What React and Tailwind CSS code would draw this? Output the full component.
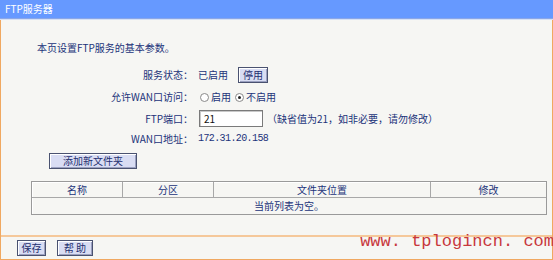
const labelCls = "w-[192px] mr-[5px] shrink-0 text-right";

const Btn = ({ children, className = "" }) => (
  <span
    className={`inline-flex items-center justify-center h-[16px] border border-[#4a5270] bg-[#d9ddf3] text-[#1f2f70] text-[10px] leading-none ${className}`}
    style={{ boxShadow: "inset 1px 1px 0 #fff, inset -1px -1px 0 #9aa0c0" }}
  >
    {children}
  </span>
);

const Radio = ({ checked }) => (
  <span className="inline-flex items-center justify-center w-[9px] h-[9px] rounded-full bg-white border border-[#8a8a8a] mr-[2px]">
    {checked && <span className="w-[3px] h-[3px] rounded-full bg-[#222]" />}
  </span>
);

export default function App() {
  return (
    <div
      className="w-[553px] h-[260px] bg-[#f6f6f3] text-[#22337a] text-[10px] leading-none flex flex-col overflow-hidden"
      style={{ fontFamily: '"Noto Sans CJK SC", "Liberation Sans", sans-serif' }}
    >
      {/* header */}
      <div className="h-[19px] shrink-0 bg-[#6699ff] text-white text-[10px] flex items-center pl-[5px] border-b border-[#8aa6e8]">
        FTP服务器
      </div>
      <div className="h-[1px] shrink-0 bg-[#d5e0f5]" />

      <div className="flex-1 flex flex-col border-x border-[#f0a860] border-b">
        {/* content */}
        <div className="h-[215px] shrink-0 flex flex-col">
          <div className="mt-[21px] ml-[36px] h-[14px] flex items-center">本页设置FTP服务的基本参数。</div>

          <div className="mt-[8px] h-[23px] flex items-center">
            <span className={labelCls}>服务状态：</span>
            <span>已启用</span>
            <Btn className="ml-[10px] w-[30px]">停用</Btn>
          </div>

          <div className="h-[22px] flex items-center">
            <span className={labelCls}>允许WAN口访问：</span>
            <span className="ml-[2px] flex items-center">
              <Radio />
              <span>启用</span>
              <span className="ml-[4px]" />
              <Radio checked />
              <span>不启用</span>
            </span>
          </div>

          <div className="h-[21px] flex items-center">
            <span className={labelCls}>FTP端口：</span>
            <span
              className="ml-[1px] w-[64px] h-[17px] bg-white border border-[#7a7a7a] flex items-center pl-[4px] text-[#111]"
              style={{ boxShadow: "inset 1px 1px 0 #c8c8c8" }}
            >
              21
            </span>
            <span className="ml-[4px]">（缺省值为21，如非必要，请勿修改）</span>
          </div>

          <div className="h-[20px] flex items-center">
            <span className={labelCls}>WAN口地址：</span>
            <span style={{ fontFamily: '"Liberation Mono", monospace' }} className="tracking-[-0.6px]">172.31.20.158</span>
          </div>

          <div className="mt-[4px] ml-[48px] flex">
            <Btn className="w-[88px]">添加新文件夹</Btn>
          </div>

          <div
            className="mt-[12px] ml-[30px] w-[516px] border border-[#9a9a9a] bg-[#f6f6f3]"
            style={{ boxShadow: "inset 1px 1px 0 #fff" }}
          >
            <div className="flex h-[16px] border-b border-[#a8a8a8]">
              <div className="w-[91px] flex items-center justify-center border-r border-[#a8a8a8]">名称</div>
              <div className="w-[91px] flex items-center justify-center border-r border-[#a8a8a8]">分区</div>
              <div className="w-[217px] flex items-center justify-center border-r border-[#a8a8a8]">文件夹位置</div>
              <div className="flex-1 flex items-center justify-center">修改</div>
            </div>
            <div className="h-[16px] flex items-center justify-center">当前列表为空。</div>
          </div>
        </div>

        <div className="h-[2px] shrink-0 bg-[#f5c89a]" />

        {/* footer */}
        <div className="flex-1 relative flex items-center">
          <Btn className="ml-[16px] w-[29px]">保存</Btn>
          <Btn className="ml-[11px] w-[36px]">帮 助</Btn>
          <span
            className="absolute right-[-2px] top-[-4px] text-[17px] text-[#c8383c] leading-none"
            style={{ fontFamily: '"Liberation Mono", monospace' }}
          >
            www. tplogincn. com
          </span>
        </div>
      </div>
    </div>
  );
}
